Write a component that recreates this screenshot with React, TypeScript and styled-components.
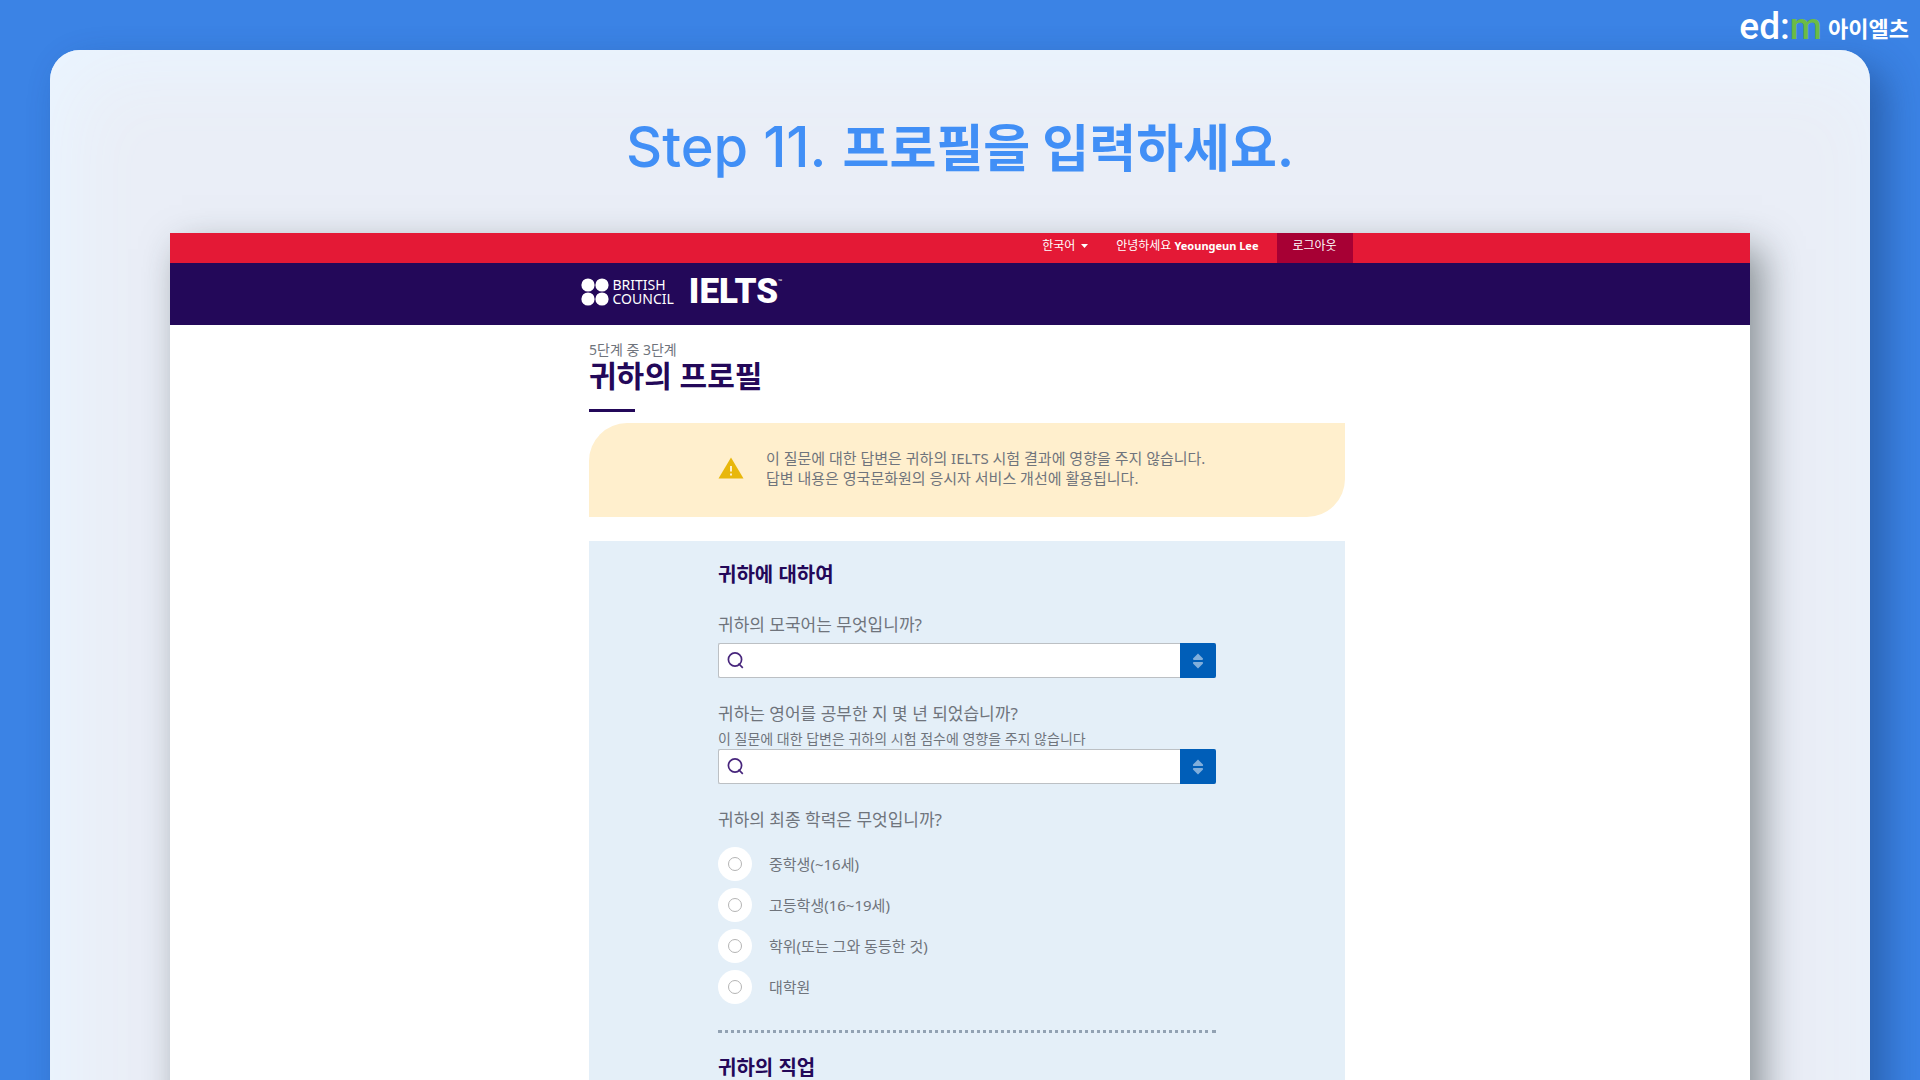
import React from "react";
import styled, { createGlobalStyle } from "styled-components";

const ink = "#230859";
const grey = "#6f747c";

const GlobalStyle = createGlobalStyle`
  *, *::before, *::after { box-sizing: border-box; }
  body {
    margin: 0;
    font-family: "Noto Sans", "Noto Sans CJK KR", sans-serif;
  }
  h1, h2, p, fieldset, legend { margin: 0; padding: 0; border: 0; }
  button, input, select { font: inherit; margin: 0; padding: 0; border: 0; border-radius: 0; }
`;

const Stage = styled.div`
  position: relative;
  height: 100vh;
  overflow: hidden;
  padding: 50px 50px 0;
  background: #3b83e5;
`;

const Brand = styled.a`
  position: absolute;
  top: 5px;
  right: 11px;
  display: flex;
  align-items: center;
  gap: 6px;
  color: #fff;
  text-decoration: none;
`;

const BrandMark = styled.span`
  font: 500 37px/44px Roboto, sans-serif;
`;

const BrandAccent = styled.span`
  color: #6cbb45;
`;

const BrandName = styled.span`
  font: 700 22px/44px "Noto Sans CJK KR", sans-serif;
`;

const Panel = styled.section`
  display: flow-root;
  min-height: 100vh;
  padding: 0 120px;
  border-radius: 30px;
  background: #eaeef7;
  box-shadow: 16px 16px 36px rgba(20, 50, 100, 0.42), inset 16px 16px 80px #eaf5ff;
`;

const StepTitle = styled.h1`
  display: flex;
  justify-content: center;
  align-items: baseline;
  gap: 16px;
  height: 183px;
  padding-top: 57px;
  color: #418ff6;
  font: 700 51px/80px Inter, "Noto Sans CJK KR", sans-serif;
`;

const StepNumber = styled.span`
  font-weight: 500;
  font-size: 56px;
`;

const Page = styled.article`
  min-height: 100vh;
  background: #fff;
  box-shadow: 12px 16px 36px rgba(40, 50, 50, 0.5);
`;

const Bar = styled.div<{ $color: string; $height: number }>`
  height: ${(p) => p.$height}px;
  padding-left: 13px;
  background: ${(p) => p.$color};
`;

const BarInner = styled.div<{ $end?: boolean }>`
  display: flex;
  justify-content: ${(p) => (p.$end ? "flex-end" : "flex-start")};
  max-width: 772px;
  height: 100%;
  margin: 0 auto;
  color: #fff;
`;

const Language = styled.label`
  display: flex;
  align-items: center;
  gap: 5px;
  height: 26px;
  margin-right: 28px;
`;

const LanguageSelect = styled.select`
  appearance: none;
  background: transparent;
  color: #fff;
  font-size: 12px;
  line-height: 20px;
`;

const Greeting = styled.p`
  margin-right: 18px;
  font-size: 12px;
  line-height: 26px;
`;

const UserName = styled.b`
  font-size: 11px;
`;

const Logout = styled.button`
  width: 76px;
  height: 30px;
  padding-bottom: 4px;
  background: #a70034;
  color: #fff;
  font-size: 12px;
  line-height: 26px;
`;

const LogoLink = styled.a`
  display: flex;
  align-items: center;
  height: 58px;
  color: #fff;
  text-decoration: none;
`;

const CouncilName = styled.span`
  margin: 0 15px 0 4px;
  font-size: 14px;
  line-height: 14px;
`;

const IeltsName = styled.span`
  font: 900 35px/40px Roboto, sans-serif;
`;

const Trademark = styled.span`
  align-self: flex-start;
  padding-top: 13px;
  font-size: 5px;
  line-height: 10px;
`;

const Content = styled.main`
  padding: 17px 0 0 14px;
`;

const Column = styled.div`
  max-width: 756px;
  margin: 0 auto;
`;

const Crumb = styled.p`
  color: ${grey};
  font-size: 14px;
  line-height: 16px;
`;

const PageTitle = styled.h2`
  color: ${ink};
  font-size: 30px;
  line-height: 36px;
  font-weight: 600;

  &::after {
    content: "";
    display: block;
    width: 46px;
    height: 3px;
    margin-top: 15px;
    background: ${ink};
  }
`;

const Notice = styled.aside`
  margin-top: 11px;
  padding: 25px 129px 29px;
  display: flex;
  align-items: center;
  gap: 22px;
  border-radius: 38px 0;
  background: #ffefcd;
  color: ${grey};
  font-size: 15px;
  line-height: 20px;
  white-space: nowrap;
`;

const Form = styled.form`
  margin-top: 24px;
  padding: 20px 129px 60px;
  background: #e4eff8;
`;

const SectionTitle = styled.h2`
  color: ${ink};
  font-size: 20px;
  line-height: 28px;
  font-weight: 600;
`;

const Field = styled.div`
  margin-top: 24px;
`;

const Label = styled.label`
  display: block;
  color: ${grey};
  font-size: 17px;
  line-height: 24px;
`;

const Hint = styled.p`
  margin-top: 3px;
  color: ${grey};
  font-size: 14px;
  line-height: 20px;
`;

const Combo = styled.div<{ $gap: number }>`
  display: flex;
  align-items: center;
  height: 35px;
  margin-top: ${(p) => p.$gap}px;
  padding-left: 8px;
  border: 1px solid #bcc0c4;
  border-right: 0;
  border-radius: 2px;
  background: #fff;
`;

const ComboInput = styled.input`
  flex: 1;
  min-width: 0;
  height: 33px;
  padding: 0 8px;
  background: transparent;
  color: ${grey};
  outline: 0;
`;

const ComboButton = styled.button`
  display: grid;
  place-items: center;
  width: 36px;
  height: 35px;
  border-radius: 0 2px 2px 0;
  background: #005eb8;
`;

const Choices = styled.fieldset`
  min-width: 0;
  margin-top: 24px;
`;

const Legend = styled.legend`
  margin-bottom: 15px;
  color: ${grey};
  font-size: 17px;
  line-height: 24px;
`;

const ChoiceList = styled.div`
  display: grid;
  gap: 7px;
`;

const Choice = styled.label`
  display: flex;
  align-items: center;
  gap: 17px;
  color: ${grey};
  font-size: 15px;
  line-height: 20px;
`;

const Radio = styled.input`
  appearance: none;
  display: grid;
  place-items: center;
  width: 34px;
  height: 34px;
  border-radius: 50%;
  background: #fff;

  &::before {
    content: "";
    width: 14px;
    height: 14px;
    border: 1px solid #b4b4b4;
    border-radius: 50%;
  }

  &:checked::before {
    border: 5px solid #005eb8;
  }
`;

const Divider = styled.hr`
  margin: 26px 0 21px;
  border: 0;
  border-top: 3px dotted #92a2b3;
`;

const levels = ["중학생(~16세)", "고등학생(16~19세)", "학위(또는 그와 동등한 것)", "대학원"];

function SearchCombo({ id, gap }: { id: string; gap: number }) {
  return (
    <Combo $gap={gap}>
      <svg width="17" height="18" viewBox="0 0 17 18" fill="none" stroke="#47257c" strokeWidth="1.7" aria-hidden="true">
        <circle cx="8" cy="7.500" r="6.600" />
        <path d="M11.500 11.500 15.800 15.800" />
      </svg>
      <ComboInput id={id} type="text" />
      <ComboButton type="button" aria-label="목록 열기">
        <svg width="12" height="16" viewBox="0 0 12 16" fill="#80aedb" aria-hidden="true">
          <path d="M6 0.5 11 5.6Q11.4 7 10 7H2Q0.600 7 1 5.600ZM6 15.500 11 10.400Q11.400 9 10 9H2Q0.600 9 1 10.400Z" />
        </svg>
      </ComboButton>
    </Combo>
  );
}

export default function App() {
  return (
    <Stage>
      <GlobalStyle />
      <Brand href="#">
        <BrandMark>
          ed:<BrandAccent>m</BrandAccent>
        </BrandMark>
        <BrandName>아이엘츠</BrandName>
      </Brand>
      <Panel>
        <StepTitle>
          <StepNumber>Step 11.</StepNumber>
          <span>프로필을 입력하세요.</span>
        </StepTitle>
        <Page>
          <Bar $color="#e41936" $height={30}>
            <BarInner $end>
              <Language>
                <LanguageSelect aria-label="언어">
                  <option>한국어</option>
                </LanguageSelect>
                <svg width="7" height="4" viewBox="0 0 7 4" fill="#fff" aria-hidden="true">
                  <path d="M0 0H7L3.500 4Z" />
                </svg>
              </Language>
              <Greeting>
                안녕하세요 <UserName>Yeoungeun Lee</UserName>
              </Greeting>
              <Logout type="button">로그아웃</Logout>
            </BarInner>
          </Bar>
          <Bar $color={ink} $height={62}>
            <BarInner>
              <LogoLink href="#">
                <svg width="28" height="28" viewBox="0 0 28 28" fill="#fff" aria-hidden="true">
                  <circle cx="7" cy="7" r="6.600" />
                  <circle cx="21" cy="7" r="6.600" />
                  <circle cx="7" cy="21" r="6.600" />
                  <circle cx="21" cy="21" r="6.600" />
                </svg>
                <CouncilName>
                  BRITISH
                  <br />
                  COUNCIL
                </CouncilName>
                <IeltsName>IELTS</IeltsName>
                <Trademark>™</Trademark>
              </LogoLink>
            </BarInner>
          </Bar>
          <Content>
            <Column>
              <Crumb>5단계 중 3단계</Crumb>
              <PageTitle>귀하의 프로필</PageTitle>
              <Notice>
                <svg width="26" height="22" viewBox="0 0 26 22" aria-hidden="true">
                  <path d="M13 0.500 25.500 21.500H0.500Z" fill="#e8b70c" />
                  <path d="M13 9V14.500M13 16.500V18.500" stroke="#ffefcd" strokeWidth="2" />
                </svg>
                <p>
                  이 질문에 대한 답변은 귀하의 IELTS 시험 결과에 영향을 주지 않습니다.
                  <br />
                  답변 내용은 영국문화원의 응시자 서비스 개선에 활용됩니다.
                </p>
              </Notice>
              <Form>
                <SectionTitle>귀하에 대하여</SectionTitle>
                <Field>
                  <Label htmlFor="language">귀하의 모국어는 무엇입니까?</Label>
                  <SearchCombo id="language" gap={6} />
                </Field>
                <Field>
                  <Label htmlFor="years">귀하는 영어를 공부한 지 몇 년 되었습니까?</Label>
                  <Hint>이 질문에 대한 답변은 귀하의 시험 점수에 영향을 주지 않습니다</Hint>
                  <SearchCombo id="years" gap={0} />
                </Field>
                <Choices>
                  <Legend>귀하의 최종 학력은 무엇입니까?</Legend>
                  <ChoiceList>
                    {levels.map((level) => (
                      <Choice key={level}>
                        <Radio type="radio" name="education" />
                        {level}
                      </Choice>
                    ))}
                  </ChoiceList>
                </Choices>
                <Divider />
                <SectionTitle>귀하의 직업</SectionTitle>
              </Form>
            </Column>
          </Content>
        </Page>
      </Panel>
    </Stage>
  );
}
